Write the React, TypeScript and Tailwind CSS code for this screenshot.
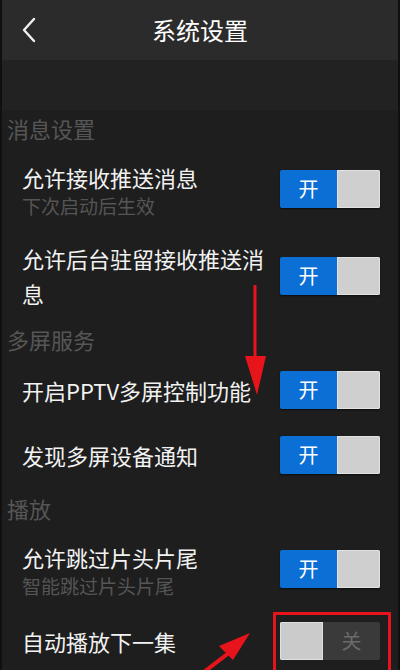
import React from "react";

const font = { fontFamily: '"Noto Sans CJK SC", "Noto Sans", sans-serif' };

function Toggle({ on }: { on: boolean }) {
  if (on) {
    return (
      <div className="flex w-[100px] h-[38px] shrink-0 rounded-[2px] overflow-hidden shadow-[0_1px_2px_rgba(0,0,0,0.6)]">
        <div className="w-[57px] bg-[#0b6fd6] flex items-center justify-center text-white text-[20px] leading-none">开</div>
        <div className="flex-1 bg-[#cfcfcf] border border-[#e2e2e2]" />
      </div>
    );
  }
  return (
    <div className="flex w-[100px] h-[38px] shrink-0 rounded-[2px] overflow-hidden">
      <div className="w-[43px] bg-[#cbcbcb] border border-[#e0e0e0]" />
      <div className="flex-1 bg-[#3a3a3a] flex items-center justify-center text-[#6a6a6a] text-[20px] leading-none">关</div>
    </div>
  );
}

function Section({ title, h }: { title: string; h: string }) {
  return (
    <div className={`${h} flex items-center pl-[5px] text-[22px] text-[#565656]`}>{title}</div>
  );
}

function Row({ title, sub, on, h }: { title: React.ReactNode; sub?: string; on: boolean; h: string }) {
  return (
    <div className={`${h} flex items-center pl-[20px] pr-[18px]`}>
      <div className="flex-1 min-w-0">
        <div className="text-[22px] leading-[34px] text-[#f2f2f2]">{title}</div>
        {sub && <div className="text-[19px] leading-[24px] text-[#555555]">{sub}</div>}
      </div>
      <Toggle on={on} />
    </div>
  );
}

export default function App() {
  return (
    <div style={font} className="relative w-[400px] h-[670px] overflow-hidden bg-[#1e1e1e] border-x-2 border-[#101010]">
      <div className="h-[60px] bg-[#2b2b2b] flex items-center relative">
        <svg className="ml-[16px]" width="22" height="30" viewBox="0 0 22 30">
          <path d="M16 4 L6 15 L16 26" fill="none" stroke="#f0f0f0" strokeWidth="2.4" strokeLinecap="round" strokeLinejoin="round" />
        </svg>
        <div className="absolute inset-0 flex items-center justify-center text-[24px] text-white">系统设置</div>
      </div>

      <div className="h-[50px] bg-[#222222] overflow-hidden flex justify-between pl-[20px] pr-[40px]">
        <div className="-mt-[25px] text-[20px] leading-[30px] text-[#444444]">允许移动网络</div>
        <div className="-mt-[25px] text-[18px] leading-[30px] text-[#404040]">已开启</div>
      </div>

      <Section title="消息设置" h="h-[36px]" />
      <Row h="h-[86px]" title="允许接收推送消息" sub="下次启动后生效" on />
      <div className="h-[88px] flex items-center pl-[20px] pr-[18px]">
        <div className="flex-1 min-w-0 text-[22px] leading-[35px] text-[#f2f2f2] pr-[2px]">允许后台驻留接收推送消息</div>
        <Toggle on />
      </div>

      <Section title="多屏服务" h="h-[38px]" />
      <Row h="h-[64px]" title="开启PPTV多屏控制功能" on />
      <Row h="h-[66px]" title="发现多屏设备通知" on />

      <Section title="播放" h="h-[40px]" />
      <Row h="h-[82px]" title="允许跳过片头片尾" sub="智能跳过片头片尾" on />
      <Row h="h-[62px]" title="自动播放下一集" on={false} />

      {/* annotations */}
      <div className="absolute left-[271px] top-[612px] w-[118px] h-[70px] border-[3px] border-[#e8141b]" />
      <svg className="absolute left-0 top-0 pointer-events-none" width="400" height="670" viewBox="0 0 400 670">
        <line x1="253" y1="285" x2="253" y2="360" stroke="#e8141b" strokeWidth="3" />
        <polygon points="243,356 264,356 255,395" fill="#e8141b" />
        <line x1="198" y1="675" x2="228" y2="652" stroke="#e8141b" strokeWidth="4" />
        <polygon points="248,633 217,646 231,660" fill="#e8141b" />
      </svg>
    </div>
  );
}
